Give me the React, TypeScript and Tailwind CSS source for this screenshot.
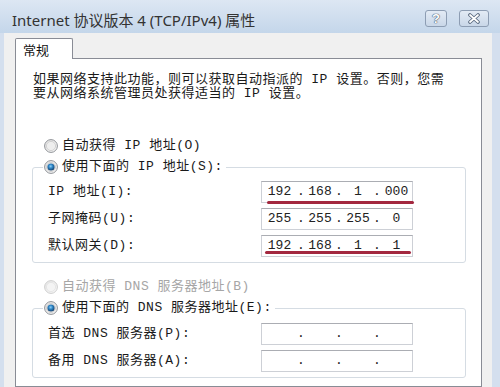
import React from "react";

const mono = "font-['Liberation_Mono','Noto_Sans_CJK_SC',monospace]";

function Radio({ checked, disabled }: { checked?: boolean; disabled?: boolean })
{
    return (
        <svg width="14" height="14" viewBox="0 0 14 14" className="shrink-0">
            <defs>
                <linearGradient id="rdRing" x1="0" y1="0" x2="1" y2="1">
                    <stop offset="0" stopColor="#e4e4e4" />
                    <stop offset="1" stopColor="#fbfbfb" />
                </linearGradient>
                <radialGradient id="rdDot" cx="0.45" cy="0.4" r="0.6">
                    <stop offset="0" stopColor="#8fd0f6" />
                    <stop offset="0.45" stopColor="#2f86c6" />
                    <stop offset="1" stopColor="#153f6a" />
                </radialGradient>
            </defs>
            <circle cx="7" cy="7" r="6.4" fill="url(#rdRing)" stroke={disabled ? "#cfcfcf" : "#8e9196"} strokeWidth="1" />
            <circle cx="7" cy="7" r="4.6" fill={disabled ? "#f4f4f4" : "#eeeeee"} stroke={disabled ? "#e2e2e2" : "#c9c9c9"} strokeWidth="0.8" />
            {checked && <circle cx="7" cy="7" r="3.6" fill="url(#rdDot)" />}
        </svg>
    );
}

function IpBox({ values, mark }: { values?: string[]; mark?: "low" | "inside" })
{
    const v = values ?? ["", "", "", ""];
    return (
        <div className={`relative flex h-[22px] w-[152px] items-center border border-[#cdd0d6] border-t-[#abadb3] bg-white text-[13px] tracking-normal text-[#222] ${mono}`}>
            <span className="w-[35px] text-center">{v[0]}</span>
            <span className="w-[8px] text-center">.</span>
            <span className="w-[30px] text-center">{v[1]}</span>
            <span className="w-[8px] text-center">.</span>
            <span className="w-[30px] text-center">{v[2]}</span>
            <span className="w-[8px] text-center">.</span>
            <span className="w-[31px] text-center">{v[3]}</span>
            {mark === "low" && <div className="absolute left-[5px] right-[-2px] bottom-[-2px] h-[3px] rounded-full bg-[#a3283f]" />}
            {mark === "inside" && <div className="absolute left-[3px] right-[1px] bottom-[2px] h-[3px] rounded-full bg-[#a3283f]" />}
        </div>
    );
}

function Row({ label, children }: { label: string; children: React.ReactNode })
{
    return (
        <div className="flex h-[22px] items-center">
            <span className="w-[213px] whitespace-nowrap">{label}</span>
            {children}
        </div>
    );
}

function RadioLine({ text, checked, disabled, mt }: { text: string; checked?: boolean; disabled?: boolean; mt: string })
{
    return (
        <div className={`relative z-10 flex h-[20px] items-center pl-[28px] ${mt}`}>
            <span className={`flex items-center gap-[4px] bg-white pr-[3px] whitespace-nowrap ${disabled ? "text-[#a6a6a6]" : "text-[#1a1a1a]"}`}>
                <span className="-ml-[1px] bg-white pl-[1px]"><Radio checked={checked} disabled={disabled} /></span>
                {text}
            </span>
        </div>
    );
}

export default function App()
{
    return (
        <main className="flex h-[387px] w-[500px] flex-col overflow-hidden bg-[#d4dfee]">
            <header className="flex h-[33px] shrink-0 items-start bg-[linear-gradient(#dde7f3,#c4d6ea)] pl-[12px] pr-[11px] pt-[10px]">
                <h1 className="text-[15px] leading-[20px] whitespace-nowrap text-[#333] font-['Noto_Sans','Noto_Sans_CJK_SC',sans-serif]">
                    Internet 协议版本 4 (TCP/IPv4) 属性
                </h1>
                <div className="ml-auto flex gap-[12px]">
                    <div className="flex h-[17px] w-[22px] items-center justify-center rounded-[3px] border border-[#8d9db3] bg-[linear-gradient(#e3ebf5,#c9d7e8)]">
                        <span className="text-[13px] leading-none font-bold text-white font-['Liberation_Sans',sans-serif] [text-shadow:0_0_1px_#4a5a70,0_0_1px_#4a5a70,0_0_1px_#4a5a70]">?</span>
                    </div>
                    <div className="flex h-[17px] w-[30px] items-center justify-center rounded-[3px] border border-[#8d9db3] bg-[linear-gradient(#e3ebf5,#c9d7e8)]">
                        <svg width="14" height="11" viewBox="0 0 14 11">
                            <path d="M3 2 L11 9 M11 2 L3 9" stroke="#56667c" strokeWidth="3.6" strokeLinecap="round" />
                            <path d="M3 2 L11 9 M11 2 L3 9" stroke="#ffffff" strokeWidth="1.8" strokeLinecap="round" />
                        </svg>
                    </div>
                </div>
            </header>

            <div className="ml-[4px] mr-[8px] flex flex-1 flex-col bg-[#f0f0f0] pl-[11px] pr-[10px] pt-[5px]">
                <div className="relative z-10 flex h-[21px] w-[58px] items-start rounded-t-[2px] border border-b-0 border-[#898c95] bg-white pl-[7px] pt-[1px] text-[13px] text-[#111] font-['Noto_Sans_CJK_SC',sans-serif]">
                    常规
                </div>
                <section className={`-mt-[1px] flex-1 border border-[#898c95] bg-white text-[13px] tracking-[0.5px] text-[#1a1a1a] ${mono}`}>
                    <p className="pl-[17px] pt-[14px] leading-[14px] whitespace-nowrap">
                        如果网络支持此功能，则可以获取自动指派的 IP 设置。否则，您需
                        <br />
                        要从网络系统管理员处获得适当的 IP 设置。
                    </p>

                    <RadioLine text="自动获得 IP 地址(O)" mt="mt-[35px]" />
                    <RadioLine text="使用下面的 IP 地址(S):" checked mt="mt-[1px]" />
                    <div className="-mt-[10px] ml-[16px] mr-[15px] flex flex-col gap-[5px] rounded-[3px] border border-[#d5dce3] pb-[5px] pl-[15px] pt-[13px]">
                        <Row label="IP 地址(I):">
                            <IpBox values={["192", "168", "1", "000"]} mark="low" />
                        </Row>
                        <Row label="子网掩码(U):">
                            <IpBox values={["255", "255", "255", "0"]} />
                        </Row>
                        <Row label="默认网关(D):">
                            <IpBox values={["192", "168", "1", "1"]} mark="inside" />
                        </Row>
                    </div>

                    <RadioLine text="自动获得 DNS 服务器地址(B)" disabled mt="mt-[14px]" />
                    <RadioLine text="使用下面的 DNS 服务器地址(E):" checked mt="mt-[1px]" />
                    <div className="-mt-[10px] ml-[16px] mr-[15px] flex flex-col gap-[5px] rounded-[3px] border border-[#d5dce3] pb-[5px] pl-[15px] pt-[14px]">
                        <Row label="首选 DNS 服务器(P):">
                            <IpBox />
                        </Row>
                        <Row label="备用 DNS 服务器(A):">
                            <IpBox />
                        </Row>
                    </div>
                </section>
            </div>
        </main>
    );
}
